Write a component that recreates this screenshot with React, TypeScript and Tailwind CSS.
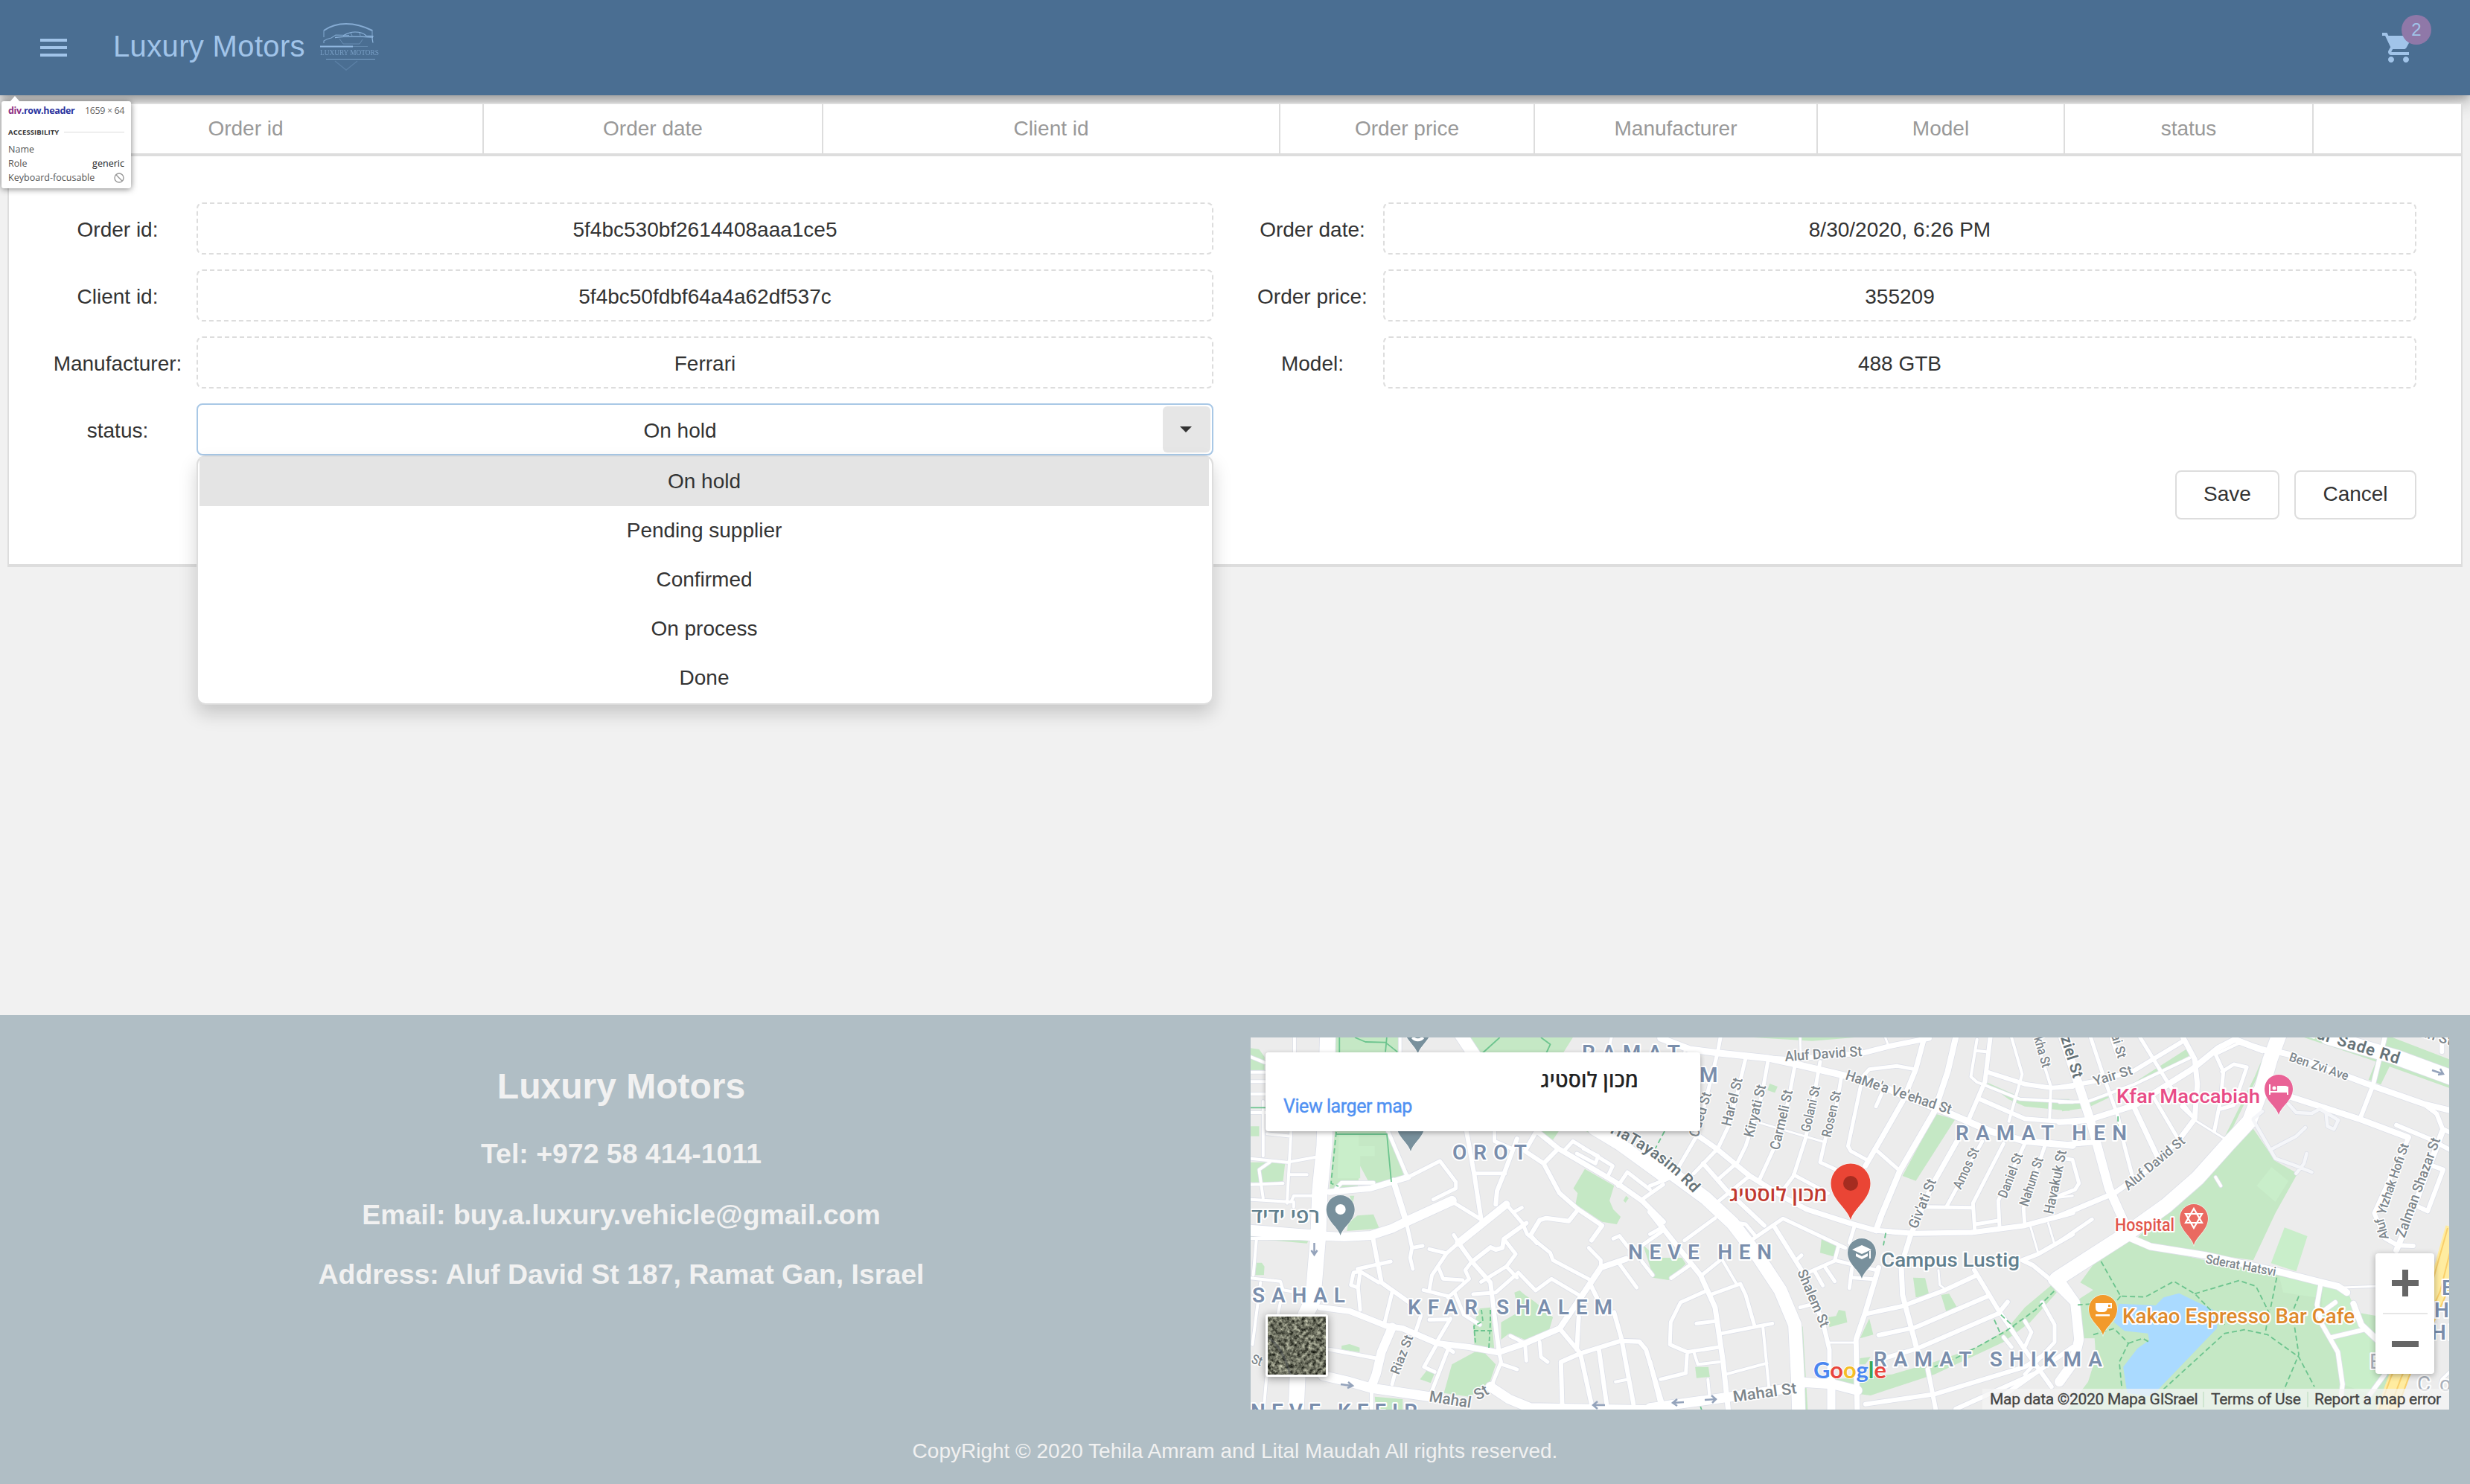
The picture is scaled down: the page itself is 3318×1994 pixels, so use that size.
import React from "react";

const SANS = "font-['Liberation_Sans',Arial,sans-serif]";
const ROBOTO = "font-[Roboto,'Liberation_Sans',sans-serif]";

/* ------------------------------------------------------------------ */
/* Top bar                                                             */
/* ------------------------------------------------------------------ */

function BrandLogo() {
  return (
    <svg className="ml-[18px] h-[68px] w-[84px]" viewBox="0 0 84 68" fill="none" stroke="#8fb6de">
      <path d="M7 20V11M72 10v8" strokeWidth="1.4" opacity=".6" />
      <path d="M7 11Q20 2 37 2T72 11" strokeWidth="2" opacity=".85" />
      <path d="M7 28v-3q4-3 10-4l6-4 18 .5" strokeWidth="1.2" opacity=".8" />
      <path d="M22 20.500 Q42 18 72 20" strokeWidth="1.3" />
      <path d="M33 18q8-5 16-5 10 0 15 5l9 .5-1 3 1 6" strokeWidth="1.2" />
      <path d="M43 14l2 4M55 14l1 4" strokeWidth="1" opacity=".7" />
      <path d="M28 22l5 7h22l4-6" strokeWidth="1" opacity=".45" />
      <path d="M2 32.500h44" strokeWidth="2" />
      <path d="M46 32.500h20" strokeWidth="1" opacity=".35" />
      <text
        x="2"
        y="44"
        textLength="79"
        lengthAdjust="spacingAndGlyphs"
        fontFamily="'Liberation Serif', serif"
        fontSize="11"
        fill="#8fb6de"
        stroke="none"
        opacity=".65"
      >
        LUXURY MOTORS
      </text>
      <path d="M10 49.500h66" strokeWidth="1.100" opacity=".7" />
      <path d="M22 52l15 12 15-12" strokeWidth="1.400" opacity=".25" />
    </svg>
  );
}

function TopBar() {
  return (
    <header className="flex h-32 shrink-0 items-center bg-[#4a6e92] pl-12 pr-[72px] text-[#a1c4e9] shadow-[0_6px_10px_-2px_rgba(0,0,0,0.2),0_12px_20px_0_rgba(0,0,0,0.14),0_2px_36px_0_rgba(0,0,0,0.12)]">
      <svg className="size-12" viewBox="0 0 24 24" fill="currentColor">
        <path d="M3 18h18v-2H3v2zm0-5h18v-2H3v2zm0-7v2h18V6H3z" />
      </svg>
      <span className="-mt-1 ml-14 text-[40px] leading-none tracking-[0.35px]">Luxury Motors</span>
      <BrandLogo />
      <div className="relative ml-auto size-12">
        <svg className="size-12" viewBox="0 0 24 24" fill="currentColor">
          <path d="M7 18c-1.100 0-1.990.9-1.990 2S5.900 22 7 22s2-.9 2-2-.9-2-2-2zM1 2v2h2l3.600 7.590-1.350 2.450c-.16.28-.25.61-.25.96 0 1.100.9 2 2 2h12v-2H7.420c-.14 0-.25-.11-.25-.25l.03-.12.9-1.630h7.450c.75 0 1.410-.41 1.750-1.030l3.580-6.490c.08-.14.12-.31.12-.48 0-.55-.45-1-1-1H5.210l-.94-2H1zm16 16c-1.100 0-1.990.9-1.990 2s.89 2 1.990 2 2-.9 2-2-.9-2-2-2z" />
        </svg>
        <span className="absolute -top-5 left-7 flex size-10 items-center justify-center rounded-full bg-[#8f78a8] text-2xl">
          2
        </span>
      </div>
    </header>
  );
}

/* ------------------------------------------------------------------ */
/* Orders panel                                                        */
/* ------------------------------------------------------------------ */

const statuses = ["On hold", "Pending supplier", "Confirmed", "On process", "Done"];

function HeaderCell({ children, width }: { children?: React.ReactNode; width: string }) {
  return (
    <div className={`${width} flex items-center justify-center border-r-2 border-[#ddd] text-[#999]`}>{children}</div>
  );
}

function Label({ children }: { children: React.ReactNode }) {
  return <div className="flex h-[70px] items-center justify-center pt-[3px]">{children}</div>;
}

function Field({ children }: { children: React.ReactNode }) {
  return (
    <div className="flex h-[70px] items-center justify-center rounded-lg border-2 border-dashed border-[#ddd] pt-[3px]">
      {children}
    </div>
  );
}

function StatusSelect() {
  return (
    <div className="relative">
      <div className="flex h-[70px] items-stretch rounded-lg border-2 border-[#a9c8e6] p-0.5">
        <div className="flex flex-1 items-center justify-center pr-[3px] pt-[3px]">On hold</div>
        <div className="flex w-16 items-center justify-center rounded-md bg-[#e6e6e6] pr-0.5">
          <svg className="h-2 w-4" viewBox="0 0 16 8">
            <path d="M0 0h16L8 8z" fill="#333" />
          </svg>
        </div>
      </div>
      <ul className="absolute inset-x-0 top-[70px] z-10 h-[335px] rounded-xl border-2 border-[#ddd] bg-white pl-0.5 pr-1 shadow-[0_12px_24px_rgba(0,0,0,0.175)]">
        {statuses.map((s, i) => (
          <li
            key={s}
            className={
              i === 0
                ? "flex h-[66px] items-center justify-center bg-[#e4e4e4] pb-px"
                : "flex h-[66px] items-center justify-center pb-px"
            }
          >
            {s}
          </li>
        ))}
      </ul>
    </div>
  );
}

function OrdersPanel() {
  return (
    <section className="relative mx-2.5 mt-2.5 h-[624px] border-x-2 border-b-4 border-t-2 border-[#ddd] bg-white text-[28px] leading-none text-[#333]">
      <div className="flex h-[70px] border-b-4 border-[#ddd]">
        <HeaderCell width="w-[638px]">Order id</HeaderCell>
        <HeaderCell width="w-[456px]">Order date</HeaderCell>
        <HeaderCell width="w-[614px]">Client id</HeaderCell>
        <HeaderCell width="w-[342px]">Order price</HeaderCell>
        <HeaderCell width="w-[380px]">Manufacturer</HeaderCell>
        <HeaderCell width="w-[332px]">Model</HeaderCell>
        <HeaderCell width="w-[334px]">status</HeaderCell>
        <div className="flex-1" />
      </div>
      <div className="mx-10 mt-[62px] grid grid-cols-[212px_1366px_38px_190px_1388px] gap-y-5">
        <Label>Order id:</Label>
        <Field>5f4bc530bf2614408aaa1ce5</Field>
        <div />
        <Label>Order date:</Label>
        <Field>8/30/2020, 6:26 PM</Field>

        <Label>Client id:</Label>
        <Field>5f4bc50fdbf64a4a62df537c</Field>
        <div />
        <Label>Order price:</Label>
        <Field>355209</Field>

        <Label>Manufacturer:</Label>
        <Field>Ferrari</Field>
        <div />
        <Label>Model:</Label>
        <Field>488 GTB</Field>

        <Label>status:</Label>
        <StatusSelect />
      </div>
      <div className="mr-[60px] mt-5 flex justify-end gap-5">
        <button className="h-[66px] w-[140px] rounded-lg border-2 border-[#ddd] pb-0.5">Save</button>
        <button className="h-[66px] w-[164px] rounded-lg border-2 border-[#ddd] pb-0.5">Cancel</button>
      </div>
    </section>
  );
}

/* ------------------------------------------------------------------ */
/* Element inspector tooltip                                           */
/* ------------------------------------------------------------------ */

function InspectorTooltip() {
  return (
    <div className="absolute left-[2px] top-[136px] z-20 h-[117px] w-[174px] rounded-[3px] bg-white px-[9px] font-['Open_Sans','Noto_Sans',sans-serif] text-[12.5px] leading-[19px] tracking-[0.02px] text-[#555] shadow-[0_1px_8px_rgba(0,0,0,0.5)]">
      <svg className="absolute -top-[7px] left-[11px] h-[8px] w-[14px]" viewBox="0 0 14 8">
        <path d="M0 8L7 0l7 8z" fill="#fff" />
      </svg>
      <div className="flex h-[27px] justify-between pt-[3px]">
        <span className="whitespace-nowrap text-[12.5px] font-bold tracking-[-0.35px] text-[#2a35a0]">
          <span className="text-[#8a2f86]">div</span>.row.header
        </span>
        <span className="whitespace-nowrap tracking-[-0.4px] text-[#666]">1659 × 64</span>
      </div>
      <div className="flex h-[28px] items-center gap-[7px]">
        <span className="text-[9.5px] font-bold tracking-[0.1px] text-[#333]">ACCESSIBILITY</span>
        <span className="h-px flex-1 bg-[#ddd]" />
      </div>
      <div>Name</div>
      <div className="flex justify-between">
        <span>Role</span>
        <span className="text-[#222]">generic</span>
      </div>
      <div className="flex items-center justify-between">
        <span>Keyboard-focusable</span>
        <svg className="size-[14px]" viewBox="0 0 14 14" fill="none" stroke="#999" strokeWidth="1.400">
          <circle cx="7" cy="7" r="6" />
          <path d="M2.800 2.800l8.400 8.400" />
        </svg>
      </div>
    </div>
  );
}

/* ------------------------------------------------------------------ */
/* Map                                                                 */
/* ------------------------------------------------------------------ */

type Road = [number, string];
interface Tile {
  transform: string;
  parks: string;
  lawns?: string;
  water?: string;
  roads: Road[];
  drives?: string;
  trails: string;
}

const west: Tile = {
  transform: "translate(1670 1380) scale(.35714 .33333)",
  parks:
    "M345 42H585V110H350ZM345 415H540L605 600 480 640 440 560 430 650 325 655ZM850 42H1240L1200 110H880ZM28 85 60 90 80 120V175H28ZM28 400 60 400V440H28ZM28 545H158L150 620 80 635 28 625ZM400 680H418L412 712ZM395 790 430 760 490 755 512 812 390 822ZM28 842 245 862 240 872 28 852ZM50 950 70 950 80 965 78 1000H45ZM1285 572 1395 640 1378 700 1392 735 1420 765 1405 795 1350 785 1250 715 1258 670 1242 650ZM865 1200 890 1135 930 1130 945 1305 870 1290ZM970 1190 1035 1150 1020 1070 1040 1062 1060 1080 1100 1110 1165 1170 1150 1225 1065 1262 1000 1235 970 1260ZM870 1310H905L950 1360 925 1440 850 1490 755 1475 785 1360ZM690 1385 720 1395 705 1435 665 1420ZM370 1285 400 1278 438 1292V1310L370 1300ZM495 1490 600 1500V1560H500ZM1505 880 1568 940V1015L1540 1000ZM1290 420H1340L1568 570V600ZM1110 415H1190L1165 455ZM1430 700 1440 680 1450 690 1438 708Z",
  lawns: "M360 430H435V480H495V520H440V610H355Z",
  roads: [
    [21, "M318 42 305 480 288 660 283 830 262 1100 235 1160 205 1400 198 1570"],
    [15, "M10 818 200 835 300 842"],
    [12, "M300 842 380 846 480 840 560 812 612 785"],
    [13, "M612 785 785 700"],
    [17, "M818 30 880 130M1320 410 1420 475 1580 600"],
    [13, "M300 1405 400 1430 480 1455 700 1490M930 1450 1000 1500 1080 1535 1580 1545"],
    [8, "M325 665 480 650 620 605M565 620 612 780M290 1130 400 1145 540 1205 600 1215 730 1275 850 1290 960 1312 1060 1275 1190 1215 1270 1090 1345 970 1440 935"],
    [5, "M620 605 740 540 800 625V650L715 695M612 780 635 890 628 930 638 975M635 890 675 882M545 420 618 605M350 650 370 628 490 628M780 700 897 777"],
    [6, "M488 850 520 1030 625 1110M895 775 870 600 840 420M950 715 955 660 985 580 1030 450M810 870 860 945 930 1030 962 1310"],
    [5, "M430 975 555 945M430 1050 405 1040 415 990 440 985 510 1030M440 985 432 1050 440 1140M560 1070 530 1200"],
    [12, "M560 1210 520 1310 500 1400 480 1455"],
    [5, "M483 1450V1570M325 1300 500 1335M870 590H985M945 420V460L1010 490"],
    [10, "M810 870 990 715"],
    [5, "M810 870 792 838M990 715 1050 790 1068 835 1155 910 1165 940 1310 1022M1020 745 1048 728"],
    [6, "M1108 410 1060 500 1130 550 1190 670 1260 735 1350 800 1310 860M1130 550 1185 490"],
    [7, "M1105 420 1185 490 1400 625 1500 700 1580 785"],
    [5, "M1210 495 1240 460 1390 560 1370 605M1255 510 1325 550 1335 520 1280 490M1410 640 1445 585 1530 655M1500 695 1580 635"],
    [6, "M1260 735 1225 782 1140 770 1115 778 1080 840 1105 870M1065 790 980 855 975 890 950 897 930 888 862 945"],
    [5, "M810 870 765 912 700 895M765 912 710 1000 700 1060M860 945 835 980 850 1015 770 1090M735 970 752 1015 825 1020M678 1060 770 1085"],
    [5, "M795 1070 830 1160 890 1200M865 1077 950 1070 1035 990 1100 1062 1160 1015 1270 1085M895 1027 990 965 1030 1010M990 965 1025 915 985 860"],
    [5, "M1300 890 1345 940V970M1415 955 1480 1050M1500 945 1540 1000M1392 853 1415 842 1450 890M1580 820 1500 880"],
    [6, "M1190 1215 1268 1315 1310 1520M1262 1170 1255 1300M1305 1035 1330 1090M1395 1150 1425 1265M1200 1530 1195 1350 1270 1315 1420 1265 1490 1268 1515 1300 1580 1530M1338 1300 1367 1520M1425 1270 1468 1520"],
    [4, "M1400 1430 1450 1420"],
    [5, "M962 1310 970 1350 940 1430V1460M975 1360 1030 1380M1005 1245 1060 1275 1065 1345M1115 1270 1120 1330 1145 1350M730 1275 680 1370 720 1390M790 1310 735 1270M770 1300 705 1480M668 1165 645 1240M780 1175 725 1275M700 1180 770 1178M570 1400 560 1440"],
    [4, "M193 42V110M28 345H90M75 350V520M28 530 165 545 270 525M180 420 165 710M28 695 180 705 190 680H270M90 430 180 440M28 182H85M28 220H85M28 270H85M100 545 60 575 75 690M28 635 150 630M175 595H240M190 705V725M75 300V340"],
    [4, "M28 1012 140 1025 150 1060 230 1075M50 855 38 1000M28 852H240M65 1030 35 1280M140 1110 130 1160M88 1410 75 1570M28 120 85 145M590 42V110M1385 42 1370 110"],
  ],
  trails:
    "M362 42V110M420 42 460 60 535 62 580 100M540 42 535 100M965 42 900 105M1120 42 1155 70 1140 105M28 325H85",
};

const centre: Tile = {
  transform: "translate(2220 1380) scale(.35714 .33333)",
  parks:
    "M380 42H760L600 56ZM0 930H110L125 955 60 1020 0 1010ZM1065 350 1138 372 990 620 940 600ZM440 228 470 240 460 265 432 255ZM635 855 695 885 680 925 630 910ZM660 1170 690 1165 700 1140 725 1145 732 1190 665 1210ZM815 1175 830 1240 780 1255ZM980 1010 1025 1012 1040 1080 990 1090ZM1085 1080 1115 1075 1145 1130 1105 1150ZM690 1420 900 1400 1060 1350 1220 1290 1330 1220 1400 1130 1500 1040 1520 1070 1420 1190 1320 1270 1220 1320 1060 1400 820 1485 780 1480 770 1450 690 1450ZM780 1335 820 1330 800 1360H778ZM430 945 500 1070 565 1210 585 1570H570L560 1280ZM160 1370H210L215 1410 165 1415ZM1250 220 1400 290 1568 290V338L1400 320 1340 292ZM0 555 60 600 50 615 0 575Z",
  roads: [
    [18, "M-20 515 60 580 200 690 300 790 400 930 480 1060 535 1200 545 1400 550 1570"],
    [9, "M30 45 140 90 250 105 430 125 540 150 700 190 830 222 950 280 1120 350 1270 420 1400 460 1580 478"],
    [7, "M430 125 500 130 790 105 900 75 1040 45M160 430 240 490 365 600 500 690 580 735 740 790 840 820 980 832 1200 828 1400 800 1580 748"],
    [5, "M255 42 245 100 215 230 165 440 100 560M350 125 320 260 285 400 245 490 155 590M435 130 410 280 350 480 320 545 250 610M535 155 510 300 460 480 400 620M630 140 600 320 575 450 530 600 495 650M710 200 690 330 650 450 630 545 700 580"],
    [3, "M400 385 650 465M555 42 557 100M875 42 885 70M130 80 110 120"],
    [5, "M530 595 660 670M365 600 250 700M835 490 925 575M865 260 840 320M1020 725 1205 728M545 935 560 920M555 1130 610 1115"],
    [6, "M190 550 280 660 420 800"],
    [7, "M1020 50 990 170 940 300 860 450 800 560"],
    [5, "M985 170 920 157 815 170 790 200 735 480 745 500 805 535"],
    [8, "M1140 42 1110 180 1060 340 930 580 860 760 840 820"],
    [6, "M1270 42 1250 220 1190 370M1255 180 1400 230 1500 245 1580 240M1230 290 1400 370 1580 385"],
    [4, "M1220 50 1197 200 1220 222 1380 290 1580 302M1350 42 1390 190 1340 380M1440 42 1498 240 1493 375M1215 95 1255 100"],
    [7, "M1145 460 1050 640 970 840 935 960 940 1080 992 1290"],
    [5, "M1240 460 1105 725M1320 470 1205 710 1212 820M1400 470 1300 700 1305 810M1215 795 1300 780M1475 480 1395 730 1400 800"],
    [3, "M1420 800 1450 910M1488 790 1510 870M1510 690 1580 680"],
    [6, "M1580 835 1450 915 1390 940 1430 960 1510 1030"],
    [13, "M1580 965 1505 1020 1580 1100"],
    [5, "M370 860 490 772 725 890 700 880 685 940 840 980M585 990 690 940M610 985 640 1042M650 970 685 1025M750 970 740 1052M755 1010 840 1017M760 800 740 870"],
    [6, "M455 800 560 980 640 1190 665 1300V1420"],
    [7, "M850 970 800 1150 765 1260 770 1570"],
    [6, "M800 1157 940 1125 1100 1060 1220 1000M850 1242 990 1210 1260 1085M880 1332 990 1298 1300 1155 1335 1108M1210 980 1300 1140 1400 1300 1500 1450"],
    [3, "M1075 980 1080 1040 1105 1060M665 1272H765"],
    [5, "M1465 1110 1512 1200V1270L1400 1400M1400 1185 1425 1230 1400 1290M1320 1250 1350 1290"],
    [13, "M545 1430 680 1440 770 1465M-10 1535 230 1500 555 1450"],
    [11, "M672 1425V1570"],
    [7, "M-10 745 90 880 180 1000 235 1130 265 1350 287 1570"],
    [5, "M-10 835 40 805M120 860 235 770M320 790 350 795 385 840M70 1012 140 960M185 1000 260 935M215 1080 330 1035 350 1080 382 1200M205 1062 105 1110 68 1190 65 1280 130 1310 250 1290M130 1310 125 1395 30 1420M260 1235 450 1195M165 1195 240 1185M-10 640 85 600"],
    [4, "M415 1210 440 1480M170 1360 250 1350M275 1400 430 1355M155 1310 170 1360M208 1420 215 1500M260 935 315 1035"],
    [6, "M-10 1350 30 1520M1035 1380 1070 1570M800 1520 1060 1480 1400 1370 1490 1310M1140 1540 1440 1395M1300 1500 1580 1290"],
  ],
  trails: "M45 420 10 490M877 830 868 880M1510 1065 1440 1140 1330 1225 1220 1290 1140 1335 1060 1370M1285 1180 1310 1240M1310 1160 1360 1210M180 1530 190 1560",
};

const east: Tile = {
  transform: "translate(2770 1380) scale(.34951 .33333)",
  parks:
    "M718 385 820 540 905 590 820 750 735 940 560 915 340 875 290 850 380 750 540 620 640 490ZM160 900 270 855 340 890 550 940 830 1000 990 1035 1100 1075 1130 1150 1210 1165V1400H1260L1230 1570H0L100 1430 130 1330 125 1255H80L60 1100 120 1060 70 1030ZM778 108 770 160 640 440 625 442 740 200ZM930 42 1080 42 1240 90 1250 42H1270L1488 130V245L1180 130ZM1210 130 1262 152 1225 232 1178 212ZM480 88 490 115 280 235 100 325 0 340V315L200 275ZM105 390H125L130 440H110Z",
  lawns:
    "M805 565 870 620 820 705 748 640ZM855 808 943 843 900 985 803 952ZM835 1005 990 1040 975 1090 850 1070ZM1000 1030 1100 1075 1150 1190 1230 1290 1230 1400 1180 1480 1080 1440 1060 1310 1000 1200Z",
  water:
    "M218 1115 360 1122 390 1090 450 1073 600 1150 595 1215 380 1450 345 1490 250 1475 235 1370 290 1295 335 1262 330 1235 240 1225 200 1190Z",
  roads: [
    [20, "M835 30 800 130 770 240 720 380 640 470 520 610 400 720 240 840 -20 1015"],
    [6, "M-10 243 120 220 270 180 460 60"],
    [4, "M-10 303 100 300 280 230 490 125M590 110 680 65 770 100"],
    [8, "M-10 383 100 375 280 315 500 170 600 85 665 50 740 80 800 100"],
    [12, "M0 30 60 220 110 380 180 650 240 790"],
    [5, "M110 42 160 200 215 360 240 480 275 620M190 42 215 120M300 42 410 230 500 360M350 280 440 440M590 110 620 180 610 290 585 420M615 180 660 150 710 162 660 315 610 330M-10 528 40 535 65 630 50 655 -10 680M-10 865 115 775M460 320 500 360"],
    [7, "M280 330 370 530M465 42 510 130 520 230 510 370 460 440 350 560 200 670 -10 762M-10 475 120 465"],
    [3, "M510 375 640 460M1080 1050 1210 1045"],
    [9, "M240 840 340 885 550 920 830 985 1000 1030 1060 1045 1095 1070"],
    [6, "M995 1030 980 1120 1000 1200 1060 1310 1078 1440 1070 1510M985 1160 1050 1110M1030 1252 1160 1220M1170 1500 1240 1400"],
    [8, "M1120 1115 1150 1200 1230 1280"],
    [8, "M830 100 870 110 1100 200 1200 240 1390 310 1500 338"],
    [6, "M1390 310 1440 350 1462 410 1500 430M1240 42 1195 235 1145 370M1330 450 1200 750 1240 850 1290 880 1350 882M1400 550 1465 575 1405 742 1360 720M1285 395 1410 450 1500 500M1460 60V100"],
    [8, "M860 275 1140 370 1330 445M1462 420 1340 760 1285 900"],
    [20, "M1020 40 1280 120 1500 205"],
    [13, "M-10 1020 50 1110 65 1260 45 1350 -10 1430"],
    [4, "M590 605 610 640M1500 1380 1460 1420 1455 1440"],
  ],
  drives:
    "M735 375 820 530 900 560 960 585M800 495 900 440 935 405M940 510 930 550 900 590M870 310 900 345 960 348 990 330 1062 375 1045 412 1020 400 1015 350M770 340 735 370",
  trails:
    "M150 945 225 1085 320 1088 430 1025 510 1075 625 1200M510 1075 680 1022 745 1045 795 1150 780 1240M825 1010 800 1140M225 1085 205 1110 60 1120M910 1085 885 1150 910 1320 850 1470M390 1460 625 1235 700 1220 790 1240 910 1330 970 1450M120 1240 200 1215 255 1275 220 1350 230 1460M255 1275 310 1255 335 1270M215 360V410",
};

const tiles = [west, centre, east];

type Street = [string, number, number, number, number, number?];
/* text, x, y, rotation, length, size */
const streets: Street[] = [
  ["Aluf David St", 2398, 1426, -4, 104, 19],
  ["HaMe'a Ve'ehad St", 2478, 1450, 18.5, 149, 19],
  ["Oded St", 2281, 1529, -73, 62, 19],
  ["Har'el St", 2325, 1514, -76, 66, 19],
  ["Kiryati St", 2355, 1529, -76, 72, 19],
  ["Carmeli St", 2390, 1546, -77, 82, 19],
  ["Golani St", 2431, 1522, -77, 63, 18],
  ["Rosen St", 2459, 1529, -77, 63, 18],
  ["Giv'ati St", 2575, 1652, -68, 70, 19],
  ["Amos St", 2634, 1599, -65, 59, 18],
  ["Daniel St", 2695, 1611, -69, 63, 18],
  ["Nahum St", 2724, 1622, -72, 68, 18],
  ["Havakuk St", 2758, 1632, -78, 87, 19],
  ["Shalem St", 2414, 1709, 67, 82, 19],
  ["Riaz St", 1879, 1848, -69, 55, 18],
  ["Mahal", 1919, 1883, 9, 57, 21],
  ["St", 1985, 1882, -30, 19, 21],
  ["Mahal St", 2329, 1884, -8, 86, 21],
  ["Yair St", 2814, 1459, -17, 54, 18],
  ["Aluf David St", 2859, 1600, -40, 101, 18],
  ["Ben Zvi Ave", 3074, 1425, 18.7, 83, 17],
  ["Zalman Shazar St", 3230, 1664, -70, 141, 19],
  ["Sderat Hatsvi", 2962, 1697, 10.6, 96, 17],
  ["kha St", 2732, 1395, 74, 42, 18],
  ["ai St", 2836, 1391, 74, 33, 18],
  ["St", 1680, 1831, 20, 14, 18],
  ["an St", 3250, 1392, 17, 44, 18],
];

type Area = [string, number, number, number];
/* text, x, baseline, length */
const areas: Area[] = [
  ["RAMAT", 2125, 1424, 132],
  ["M", 2283, 1454, 21],
  ["OROT", 1951, 1558, 100],
  ["RAMAT HEN", 2627, 1532, 230],
  ["NEVE HEN", 2187, 1692, 193],
  ["SAHAL", 1682, 1750, 125],
  ["KFAR SHALEM", 1891, 1766, 275],
  ["RAMAT SHIKMA", 2517, 1836, 307],
  ["NEVE KEFIR", 1680, 1906, 224],
  ["E", 3280, 1740, 17],
  ["H", 3270, 1770, 20],
  ["HI", 3266, 1800, 30],
];

interface PinProps {
  x: number;
  y: number;
  r: number;
  tip: number;
  color: string;
  children?: React.ReactNode;
}

function Pin({ x, y, r, tip, color, children }: PinProps) {
  const h = tip - y;
  const d = `M0 ${h}C${-r * 0.18} ${h * 0.66} ${-r} ${h * 0.45} ${-r} 0A${r} ${r} 0 0 1 ${r} 0C${r} ${h * 0.45} ${r * 0.18} ${h * 0.66} 0 ${h}Z`;
  return (
    <g transform={`translate(${x} ${y})`}>
      <path d={d} fill={color} stroke="#fff" strokeOpacity=".6" strokeWidth="1.500" paintOrder="stroke" />
      {children}
    </g>
  );
}

function MapCanvas() {
  const halo = { stroke: "#fff", strokeWidth: 4, strokeLinejoin: "round" as const, paintOrder: "stroke" as const };
  return (
    <svg className="h-[500px] w-[1610px]" viewBox="1680 1394 1610 500" fontFamily="Roboto, 'Liberation Sans', sans-serif">
      <rect x="1680" y="1394" width="1610" height="500" fill="#ececec" />
      {tiles.map((t) => (
        <g key={t.transform} transform={t.transform}>
          <path d={t.parks} fill="#c5e8c5" />
          {t.lawns && <path d={t.lawns} fill="#c9eeca" />}
          {t.water && <path d={t.water} fill="#aadaff" />}
        </g>
      ))}
      <path d="M3298 1650 3274 1735 3222 1850 3200 1910" fill="none" stroke="#ffeca0" strokeWidth="26" />
      <path
        d="M3288 1650 3264 1735 3212 1850 3190 1910M3298 1655 3278 1735 3226 1850 3204 1910M3306 1665 3288 1735 3236 1850 3214 1910"
        fill="none"
        stroke="#f9cf6a"
        strokeWidth="2"
      />
      {tiles.map((t) => (
        <g key={t.transform} transform={t.transform} fill="none" stroke="#dcdfe8" strokeLinejoin="round" strokeLinecap="round">
          {t.roads.map(([w, d]) => (
            <path key={d} d={d} strokeWidth={w + 1.6} vectorEffect="non-scaling-stroke" />
          ))}
          {t.drives && <path d={t.drives} strokeWidth="6" vectorEffect="non-scaling-stroke" />}
        </g>
      ))}
      {tiles.map((t) => (
        <g key={t.transform} transform={t.transform} fill="none" stroke="#fff" strokeLinejoin="round" strokeLinecap="round">
          {t.roads.map(([w, d]) => (
            <path key={d} d={d} strokeWidth={w} vectorEffect="non-scaling-stroke" />
          ))}
          {t.drives && <path d={t.drives} stroke="#f5f6f9" strokeWidth="4.500" vectorEffect="non-scaling-stroke" />}
          <path
            d={t.trails}
            stroke="#6cc48e"
            strokeWidth="1.800"
            strokeLinecap="butt"
            strokeDasharray={t === west ? undefined : "7 4"}
            vectorEffect="non-scaling-stroke"
          />
        </g>
      ))}
      {/* garden paths */}
      <g fill="none" stroke="#6cc48e" strokeWidth="1.800">
        <path d="M1795 1521 1788 1590 1798 1594" strokeDasharray="7 4" />
        <path d="M1794 1524H1863L1869 1588" />
        <path d="M1990 1760 1992 1775 1980 1782 1982 1805M2002 1760V1776L2000 1812M1980 1788H2004" strokeDasharray="6 3" />
      </g>
      {/* one-way arrows */}
      <g fill="none" stroke="#94a3bb" strokeWidth="2.500">
        <path d="M1765.500 1670v14m-4-4 4 6 4-6M1801 1860l15 2m-5-5 6 5-7 3M2156 1888h-16m6-5-6 5 6 5M2262 1884l-15 1m6-5-6 5 6 4M2290 1881l15-1m-6-5 6 5-5 5M3267 1438l15 5m-4-7 4 7-7 1" />
      </g>
      <g fontWeight="600" fontSize="28" fill="#7a8eac" {...halo}>
        {areas.map(([text, x, y, len]) => (
          <text key={text} x={x} y={y} textLength={len} lengthAdjust="spacing">
            {text}
          </text>
        ))}
      </g>
      <g fontSize="28" fill="#a9b0ba" {...halo}>
        <text x="3247" y="1869" textLength="46">
          Co
        </text>
        <text x="3183" y="1839">
          E
        </text>
      </g>
      <g fill="#7d868c" fontWeight="500" stroke="#fff" strokeWidth="3" strokeLinejoin="round" paintOrder="stroke">
        {streets.map(([text, x, y, rot, len, size]) => (
          <text
            key={`${text}${x}`}
            transform={`translate(${x} ${y}) rotate(${rot})`}
            textLength={len}
            lengthAdjust="spacingAndGlyphs"
            fontSize={size}
          >
            {text}
          </text>
        ))}
        <path id="hatayasim" d="M2162 1522Q2228 1552 2277 1606" fill="none" stroke="none" />
        <path id="hofi" d="M3209 1664 3202 1638 3237 1536" fill="none" stroke="none" />
        <text fontSize="21" fontWeight="600" fill="#667378">
          <textPath href="#hatayasim" textLength="140">
            HaTayasim Rd
          </textPath>
        </text>
        <text fontSize="17">
          <textPath href="#hofi" textLength="132">
            Aluf Ytzhak Hofi St
          </textPath>
        </text>
        <g fontWeight="600" fill="#667378">
          <text transform="translate(2764 1381) rotate(73)" fontSize="21" textLength="72">
            Uziel St
          </text>
          <text transform="translate(3098 1391) rotate(17.5)" fontSize="22" textLength="129">
            dur Sade Rd
          </text>
        </g>
      </g>

      {/* points of interest */}
      <Pin x={1904.6} y={1380} r={19} tip={1416} color="#78909c">
        <path d="M-7 14a9 9 0 0 0 14 0" fill="none" stroke="#fff" strokeWidth="4" />
      </Pin>
      <Pin x={1895} y={1511} r={19} tip={1547} color="#78909c" />
      <Pin x={1800.7} y={1625} r={19} tip={1660} color="#78909c">
        <circle r="7" fill="#fff" />
      </Pin>
      <Pin x={2501} y={1683} r={19} tip={1718} color="#78909c">
        <path d="M-13 -4 0 -10 13 -4 0 2ZM-8 1V5L0 9 8 5V1L0 5ZM10 -2V8H12V-3Z" fill="#fff" />
      </Pin>
      <Pin x={3061} y={1463} r={19} tip={1498} color="#e96296">
        <path d="M-12 -6V8M-12 4H12V8M12 4V-2H-1V4" fill="none" stroke="#fff" strokeWidth="2" />
        <path d="M-2 -4H9Q12 -4 12 -1V4H-2Z" fill="#fff" />
        <circle cx="-6" cy="-1" r="2.500" fill="#fff" />
      </Pin>
      <Pin x={2947} y={1637} r={19} tip={1673} color="#ea6a61">
        <path d="M0 -13 11 6H-11ZM0 13 11 -6H-11Z" fill="none" stroke="#fff" strokeWidth="2.200" />
      </Pin>
      <Pin x={2825} y={1759} r={19} tip={1794} color="#f29a2b">
        <path d="M-10 -8H12V-1H6Q5 4 0 4H-4Q-10 4 -10 -2ZM-10 7H9V9.500H-10Z" fill="#fff" />
        <path d="M7 -6H10V-3H7Z" fill="#f29a2b" />
      </Pin>
      <Pin x={2486} y={1590} r={26.5} tip={1639} color="#ea4535">
        <circle r="10" fill="#a52c20" />
      </Pin>
      <g fontSize="26" fontWeight="500" {...halo}>
        <text x="2527" y="1702" textLength="186" lengthAdjust="spacingAndGlyphs" fill="#62808e">
          Campus Lustig
        </text>
        <text x="2843" y="1482" textLength="193" lengthAdjust="spacingAndGlyphs" fill="#e84c86">
          Kfar Maccabiah
        </text>
        <text x="2841" y="1654" textLength="80" lengthAdjust="spacingAndGlyphs" fontSize="23" fill="#e2574c">
          Hospital
        </text>
        <text x="2851" y="1778" textLength="312" lengthAdjust="spacingAndGlyphs" fontSize="27" fill="#de8a2c">
          Kakao Espresso Bar Cafe
        </text>
        <g fontFamily="'Open Sans', 'Liberation Sans', 'DejaVu Sans', sans-serif" fontWeight="600">
          <text x="2323" y="1614" textLength="132" lengthAdjust="spacingAndGlyphs" fill="#c0392f">
            מכון לוסטיג
          </text>
          <text x="1681" y="1643" textLength="92" lengthAdjust="spacingAndGlyphs" fill="#62808e">
            רפי ידיד
          </text>
        </g>
      </g>
      <text
        x="2436"
        y="1852"
        textLength="98"
        lengthAdjust="spacingAndGlyphs"
        fontFamily="Lato, sans-serif"
        fontWeight="700"
        fontSize="31"
        stroke="#fff"
        strokeWidth="2"
        paintOrder="stroke"
      >
        <tspan fill="#4a86f0">G</tspan>
        <tspan fill="#e8453c">o</tspan>
        <tspan fill="#f5bd27">o</tspan>
        <tspan fill="#4a86f0">g</tspan>
        <tspan fill="#3ba757">l</tspan>
        <tspan fill="#e8453c">e</tspan>
      </text>
    </svg>
  );
}

function SatelliteToggle() {
  return (
    <div className="absolute left-5 top-[372px] size-[84px] rounded-[3px] border-[3px] border-white bg-[#5f635b] shadow-[0_2px_12px_rgba(0,0,0,0.4)]">
      <svg className="size-full" viewBox="0 0 78 78">
        <filter id="terrain" x="0" y="0" width="100%" height="100%" colorInterpolationFilters="sRGB">
          <feTurbulence type="fractalNoise" baseFrequency=".2" numOctaves="4" seed="7" />
          <feColorMatrix values="1.1 0 0 0 -.13  1.1 0 0 0 -.12  1 0 0 0 -.13  0 0 0 0 1" />
        </filter>
        <rect width="78" height="78" filter="url(#terrain)" />
        <path d="M0 28Q20 40 30 78" fill="none" stroke="#4a4e52" strokeWidth="3" opacity=".5" />
      </svg>
    </div>
  );
}

function LocationMap() {
  return (
    <div className={`${ROBOTO} relative h-[500px] w-[1610px] overflow-hidden`}>
      <MapCanvas />
      <div className="absolute left-5 top-5 h-[106px] w-[584px] rounded-[4px] bg-white pl-6 pr-[83px] pt-[19px] shadow-[0_2px_6px_rgba(0,0,0,0.3)]">
        <div
          dir="rtl"
          className="font-['Open_Sans','Liberation_Sans','DejaVu_Sans',sans-serif] text-[28px] font-semibold leading-[34px] text-[#222]"
        >
          מכון לוסטיג
        </div>
        <div className="mt-1 text-[25px] leading-[32px] tracking-[-0.45px] text-[#5091f2] [-webkit-text-stroke:0.4px_#5091f2]">
          View larger map
        </div>
      </div>
      <SatelliteToggle />
      <div className="absolute left-[1511px] top-[290px] flex h-[162px] w-[79px] flex-col items-center rounded-[4px] bg-white shadow-[0_2px_8px_rgba(0,0,0,0.3)]">
        <svg className="h-[80px] w-9" viewBox="0 0 36 80">
          <path d="M0 36h14V22h8v14h14v8H22v14h-8V44H0z" fill="#666" />
        </svg>
        <div className="h-0.5 w-[60px] bg-[#e6e6e6]" />
        <svg className="h-[80px] w-9" viewBox="0 0 36 80">
          <path d="M0 36h36v8H0z" fill="#666" />
        </svg>
      </div>
      <div className="absolute bottom-0 right-0 flex h-7 items-center whitespace-nowrap bg-[#f5f5f5]/70 pl-2.5 text-[21px] leading-none tracking-[-0.3px] text-[#444] [-webkit-text-stroke:0.3px_#444]">
        <span className="w-[286px]">Map data ©2020 Mapa GISrael</span>
        <span className="w-[142px] border-x-2 border-[#cfe5d0] pl-[9px]">Terms of Use</span>
        <span className="w-[189px] pl-2">Report a map error</span>
      </div>
    </div>
  );
}

/* ------------------------------------------------------------------ */
/* Footer                                                              */
/* ------------------------------------------------------------------ */

function Footer() {
  return (
    <footer className="mt-auto flex h-[630px] shrink-0 flex-col bg-[#b0bec5] text-[#f1f1f1]">
      <div className="flex pt-[30px]">
        <div className="w-[1680px] pr-[11px] text-center font-bold">
          <h2 className="mt-[38px] text-[48px] leading-[56px]">Luxury Motors</h2>
          <h3 className="mt-[41px] text-[37.44px] leading-[42px]">Tel: +972 58 414-1011</h3>
          <h3 className="mt-[40px] text-[37.44px] leading-[42px]">Email: buy.a.luxury.vehicle@gmail.com</h3>
          <h3 className="mt-[38px] text-[37.44px] leading-[42px]">Address: Aluf David St 187, Ramat Gan, Israel</h3>
        </div>
        <LocationMap />
      </div>
      <p className="mt-[40px] text-center text-[28px] leading-[32px]">
        CopyRight © 2020 Tehila Amram and Lital Maudah All rights reserved.
      </p>
    </footer>
  );
}

export default function App() {
  return (
    <div className={`${SANS} relative flex h-[1994px] w-[3318px] flex-col overflow-hidden bg-[#f1f1f1]`}>
      <TopBar />
      <OrdersPanel />
      <InspectorTooltip />
      <Footer />
    </div>
  );
}
